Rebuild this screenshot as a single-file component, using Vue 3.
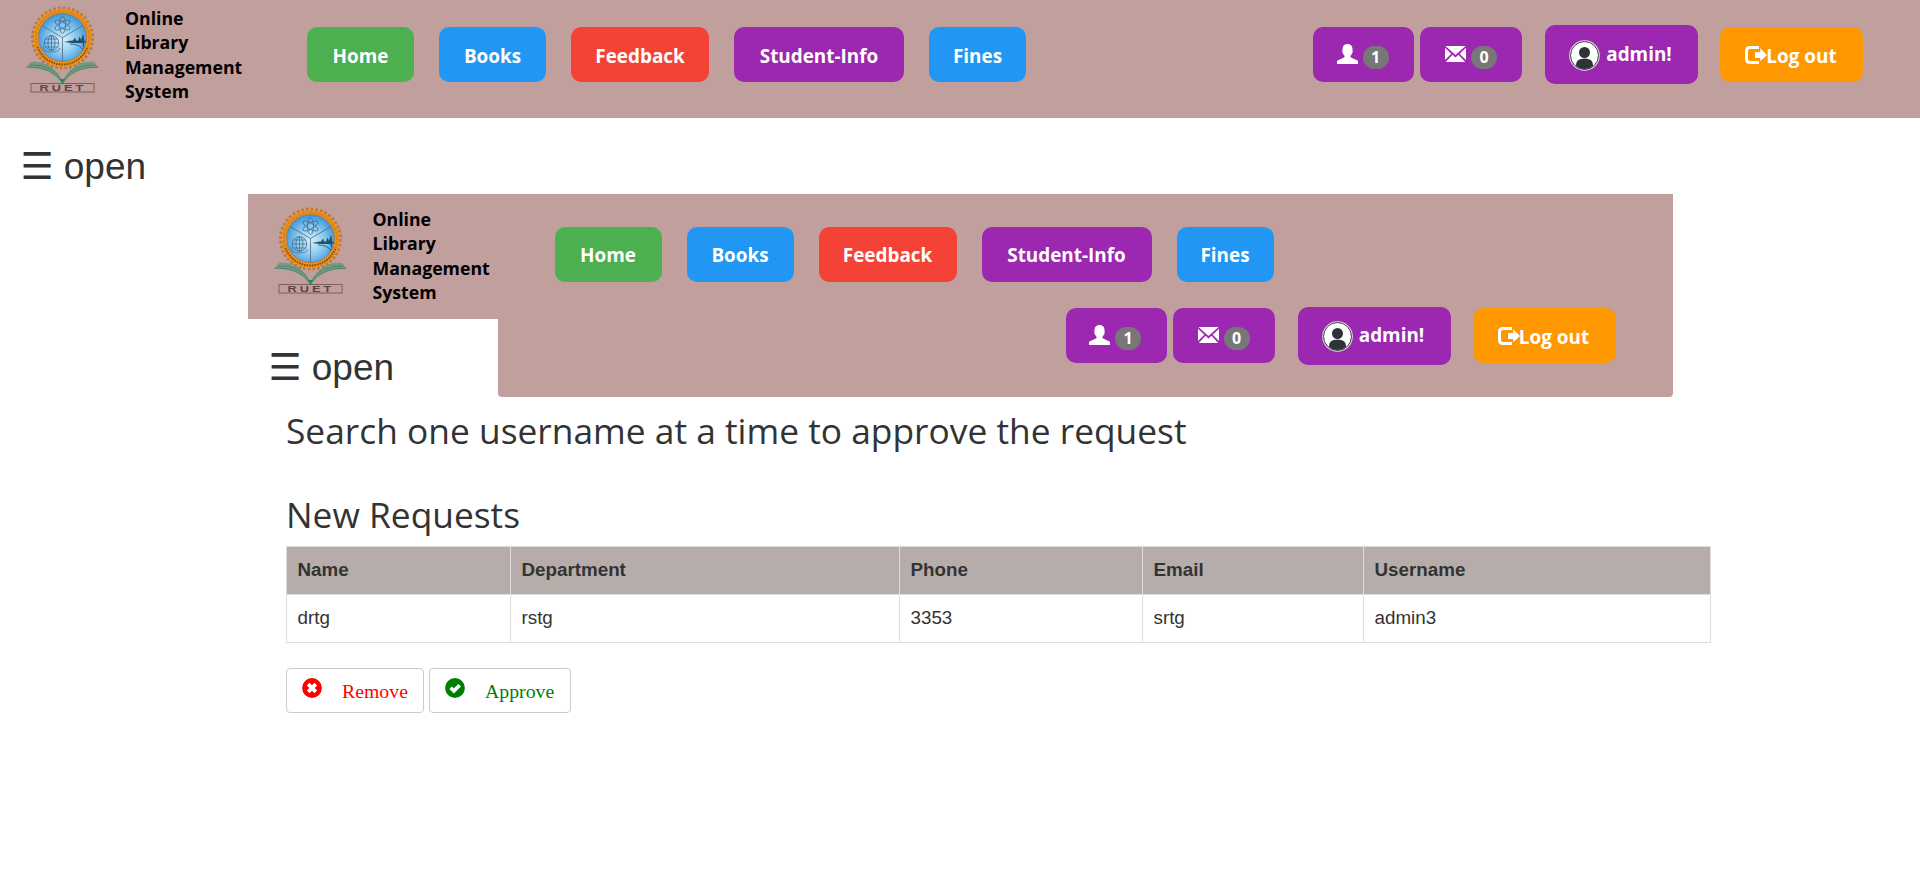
<script setup>
const headers = ['top', 'nested']

const links = [
  { label: 'Home', cls: 'home' },
  { label: 'Books', cls: 'books' },
  { label: 'Feedback', cls: 'feedback' },
  { label: 'Student-Info', cls: 'student' },
  { label: 'Fines', cls: 'fines' },
]

const columns = ['Name', 'Department', 'Phone', 'Email', 'Username']
const rows = [['drtg', 'rstg', '3353', 'srtg', 'admin3']]
</script>

<template>
  <div class="page">
    <div v-for="h in headers" :key="h" class="bar" :class="h">
      <div class="left">
        <div class="brand">
          <svg class="logo" width="76" height="90" viewBox="0 0 76 90">
            <defs>
              <radialGradient :id="'sky-' + h" cx="50%" cy="55%" r="55%">
                <stop offset="0" stop-color="#d8f0fb" />
                <stop offset="0.5" stop-color="#8fcdf2" />
                <stop offset="1" stop-color="#3a93d6" />
              </radialGradient>
            </defs>
            <circle cx="38.5" cy="32" r="30" fill="none" stroke="#c47a2a" stroke-width="3" stroke-dasharray="2.7 2.01" />
            <circle cx="38.5" cy="32" r="29" fill="#ee8f1c" />
            <circle cx="38.5" cy="32" r="26.6" fill="none" stroke="#8a5a22" stroke-width="1.6" stroke-dasharray="1.2 1.4" opacity=".4" />
            <path d="M13.500 41a26.600 26.600 0 0 0 50 0" fill="none" stroke="#3d2a14" stroke-width="1.8" stroke-dasharray="1.5 1.1" opacity=".6" />
            <circle cx="38.5" cy="31.5" r="24" :fill="'url(#sky-' + h + ')'" stroke="#7d6a50" stroke-width=".5" />
            <path d="M38.5 31.5V55M38.5 31.5L18 19.500M38.5 31.5L59 19.500" stroke="#567" stroke-width=".8" />
            <g fill="none" stroke="#3d6482" stroke-width=".7">
              <ellipse cx="38.500" cy="19" rx="3" ry="8.500" />
              <ellipse cx="38.500" cy="19" rx="3" ry="8.500" transform="rotate(60 38.500 19)" />
              <ellipse cx="38.500" cy="19" rx="3" ry="8.500" transform="rotate(120 38.500 19)" />
              <circle cx="27.500" cy="37" r="7.300" />
              <ellipse cx="27.500" cy="37" rx="3.500" ry="7.300" />
              <path d="M20 37h15M21.500 33h12M21.500 41h12M27.500 29.700v14.600" />
              <path d="M19 40q0 6 8 6t9-4" />
            </g>
            <path d="M40 36l6-1.200 3-.3 2-3 1.200 3h2l1.300-4 1.500 3.500 2-6.500 1.500 7.500h1.500v1.500H60v7l-1.500-6.500H48z" fill="#23506b" />
            <path d="M46 38q10 0 13 6" fill="none" stroke="#23506b" stroke-width=".8" />
            <path d="M7 56q21-2 31.500 20v2Q28 61 2 62z" fill="#6d9480" opacity=".85" />
            <path d="M70 56q-21-2-31.500 20v2Q49 61 75 62z" fill="#6d9480" opacity=".85" />
            <path d="M3 61q25-1 35.500 16Q50 60 74 61M6 59q24-1 32.500 16Q48 58 71 59" fill="none" stroke="#3e8a66" stroke-width=".8" />
            <path d="M36 73l2.500 5 2.500-5" fill="#17905a" />
            <rect x="7" y="77.500" width="63" height="8.500" fill="none" stroke="#7d5f5e" />
            <text transform="translate(15.500 84.800) scale(1.500 1)" class="ruet">RUET</text>
          </svg>
          <div class="brand-text">Online<br />Library<br />Management<br />System</div>
        </div>
        <div v-if="h === 'nested'" class="open"><span class="burger">☰</span> open</div>
      </div>
      <div class="main">
        <nav class="links">
          <a v-for="l in links" :key="l.cls" class="btn" :class="l.cls">{{ l.label }}</a>
        </nav>
        <div class="actions">
          <a class="btn count">
            <svg class="glyph" width="21" height="20" viewBox="0 0 21 20"><path d="M0 20v-2.500q0-.8 1-1.200l5.500-2.500q1.200-.6 1.200-1.800-1-.8-1.500-2.300-.8-.5-.8-1.600-.3-1 .1-1.600V4.500Q6 0 10.500 0T15.500 4.500v2q.4.600.1 1.600 0 1.100-.8 1.600-.5 1.500-1.500 2.300 0 1.200 1.200 1.800L20 16.300q1 .4 1 1.200V20z" fill="#fff" /></svg>
            <span class="badge">1</span>
          </a>
          <a class="btn count mail">
            <svg class="glyph" width="21" height="20" viewBox="0 0 21 20"><path d="M.5 2h20L10.500 11zM0 3.800L6.300 9.700 0 16zM21 3.800L14.700 9.700 21 16zM.8 18l6.700-7.200 3 2.800 3-2.800L20.200 18z" fill="#fff" /></svg>
            <span class="badge">0</span>
          </a>
          <a class="btn admin">
            <svg class="avatar" width="31" height="31" viewBox="0 0 31 31">
              <circle cx="15.500" cy="15.500" r="15.300" fill="#e6e0e8" />
              <circle cx="15.500" cy="15.500" r="14" fill="#fff" stroke="#36393e" stroke-width="1" />
              <circle cx="15.500" cy="12.500" r="5.500" fill="#2f3338" />
              <path d="M6.800 25.500q0-7 8.700-7t8.700 7q-3.500 3.500-8.700 3.500t-8.700-3.500z" fill="#2f3338" />
            </svg>
            <span>admin!</span>
          </a>
          <a class="btn logout">
            <svg class="out" width="22" height="18" viewBox="0 0 22 18"><path d="M14 1.500H5Q1.500 1.500 1.500 5v8q0 3.500 3.500 3.500h9" fill="none" stroke="#fff" stroke-width="3" /><path d="M10 6h5.200V2.200L22 9l-6.800 6.300V12H10z" fill="#fff" /></svg>
            <span>Log out</span>
          </a>
        </div>
      </div>
      <div v-if="h === 'top'" class="open"><span class="burger">☰</span> open</div>
    </div>

    <main class="content">
      <h2 class="search">Search one username at a time to approve the request</h2>
      <h2 class="new">New Requests</h2>
      <table>
        <colgroup>
          <col class="c1" /><col class="c2" /><col class="c3" /><col class="c4" /><col />
        </colgroup>
        <thead>
          <tr><th v-for="c in columns" :key="c">{{ c }}</th></tr>
        </thead>
        <tbody>
          <tr v-for="(r, i) in rows" :key="i"><td v-for="v in r" :key="v">{{ v }}</td></tr>
        </tbody>
      </table>
      <div class="decide">
        <button class="remove" type="button">
          <svg width="20" height="20" viewBox="0 0 20 20"><circle cx="10" cy="10" r="9.900" fill="red" /><path d="M6.200 6.200l7.600 7.600M13.800 6.200l-7.600 7.600" stroke="#fff" stroke-width="3.800" /></svg>
          <span>Remove</span>
        </button>
        <button class="approve" type="button">
          <svg width="20" height="20" viewBox="0 0 20 20"><circle cx="10" cy="10" r="9.900" fill="green" /><path d="M5.700 9.700l3.200 3.200 5.800-5.600" fill="none" stroke="#fff" stroke-width="3.600" /></svg>
          <span>Approve</span>
        </button>
      </div>
    </main>
  </div>
</template>

<style>
body {
  margin: 0;
  background: #fff;
}
</style>

<style scoped>
.page {
  height: 878px;
  overflow: hidden;
  color: #333;
  font-family: "Liberation Sans", Arial, sans-serif;
}
.bar {
  display: flex;
}
.top {
  flex-wrap: wrap;
  height: 194px;
  align-content: flex-start;
}
.nested {
  width: 1425px;
  height: 203px;
  margin-left: 248px;
}
.left {
  width: 250px;
  flex: none;
}
.brand {
  display: flex;
  box-sizing: border-box;
  background: #c19f9d;
}
.top .brand {
  height: 118px;
  padding: 6px 0 0 24px;
}
.nested .brand {
  height: 125px;
  padding: 13px 0 0 24px;
}
.logo {
  flex: none;
}
.ruet {
  font: bold 8.500px "Liberation Sans", Arial, sans-serif;
  letter-spacing: 2px;
  fill: #5b4548;
}
.brand-text {
  margin: 0 0 0 25px;
  color: #000;
  font: bold 17.700px/24.300px "Open Sans", sans-serif;
}
.nested .brand-text {
  margin-left: 24.500px;
}
.main {
  display: flex;
  flex-wrap: wrap;
  align-content: flex-start;
  box-sizing: border-box;
  background: #c19f9d;
}
.top .main {
  width: 1670px;
  height: 118px;
  padding: 25px 57px 0;
}
.nested .main {
  width: 1175px;
  height: 203px;
  padding: 31px 57.500px 0 56.500px;
  border-radius: 0 0 4px 4px;
}
.links {
  display: flex;
  gap: 25px;
  height: 55px;
  padding-top: 2px;
}
.actions {
  display: flex;
  align-items: center;
  height: 59px;
  margin-left: auto;
}
.nested .actions {
  margin-top: 24px;
}
.btn {
  display: flex;
  align-items: center;
  justify-content: center;
  box-sizing: border-box;
  height: 55px;
  border-radius: 10px;
  color: #fff;
  background: #9c27b0;
  font: bold 18.900px/28px "Open Sans", sans-serif;
  white-space: nowrap;
}
.links .btn {
  padding-top: 2px;
}
.nested .links .btn {
  padding-top: 1px;
}
.home {
  width: 107px;
  background: #4caf50;
}
.books {
  width: 107px;
  background: #2196f3;
}
.feedback {
  width: 138px;
  background: #f44336;
}
.student {
  width: 170px;
}
.fines {
  width: 97px;
  background: #2196f3;
}
.count {
  width: 101px;
  padding-right: 2px;
}
.mail {
  width: 102px;
  margin-left: 6px;
  padding-right: 0;
}
.glyph {
  margin-bottom: 2px;
}
.badge {
  width: 26px;
  height: 23px;
  margin: 5px 0 0 5px;
  border-radius: 12px;
  background: #777;
  font-size: 16px;
  line-height: 23px;
  text-align: center;
}
.admin {
  width: 153px;
  height: 59px;
  margin-left: 23px;
  padding-right: 2px;
}
.nested .admin {
  height: 58px;
}
.avatar {
  margin: 2px 6px 0 0;
}
.admin span {
  margin-top: -2px;
}
.logout {
  width: 143px;
  margin-left: 22px;
  padding-right: 1px;
  background: #ff9800;
}
.logout span {
  margin: 2px 0 0 -1px;
}
.open {
  height: 51px;
  padding: 23px 0 0 21.500px;
  font-size: 37px;
  line-height: 51px;
  white-space: pre;
}
.burger {
  display: inline-block;
  width: 33px;
  margin-left: -1px;
  font-family: "DejaVu Sans", sans-serif;
  line-height: 0;
}
.content {
  width: 1425px;
  margin-left: 286px;
}
h2 {
  margin: 0;
  font: 400 35.350px/40px "Open Sans", sans-serif;
  white-space: nowrap;
}
.search {
  padding-top: 13px;
}
.new {
  padding-top: 44px;
}
table {
  width: 1425px;
  margin-top: 12px;
  border-collapse: collapse;
  table-layout: fixed;
  font-size: 18.800px;
}
.c1 {
  width: 224px;
}
.c2 {
  width: 389px;
}
.c3 {
  width: 243px;
}
.c4 {
  width: 221px;
}
th,
td {
  height: 45px;
  padding: 0 10.500px 2px;
  border: 1px solid #ddd;
  text-align: left;
}
th {
  background: #b6adab;
}
.decide {
  display: flex;
  gap: 5px;
  margin-top: 25px;
}
button {
  display: flex;
  box-sizing: border-box;
  height: 45px;
  padding: 9px 15px;
  border: 1px solid #ccc;
  border-radius: 4px;
  background: #fff;
  font: 19.800px/26px "Liberation Serif", serif;
}
button span {
  margin: 0 0 0 20px;
}
.remove {
  width: 138px;
  color: red;
}
.approve {
  width: 142px;
  color: green;
}
</style>
